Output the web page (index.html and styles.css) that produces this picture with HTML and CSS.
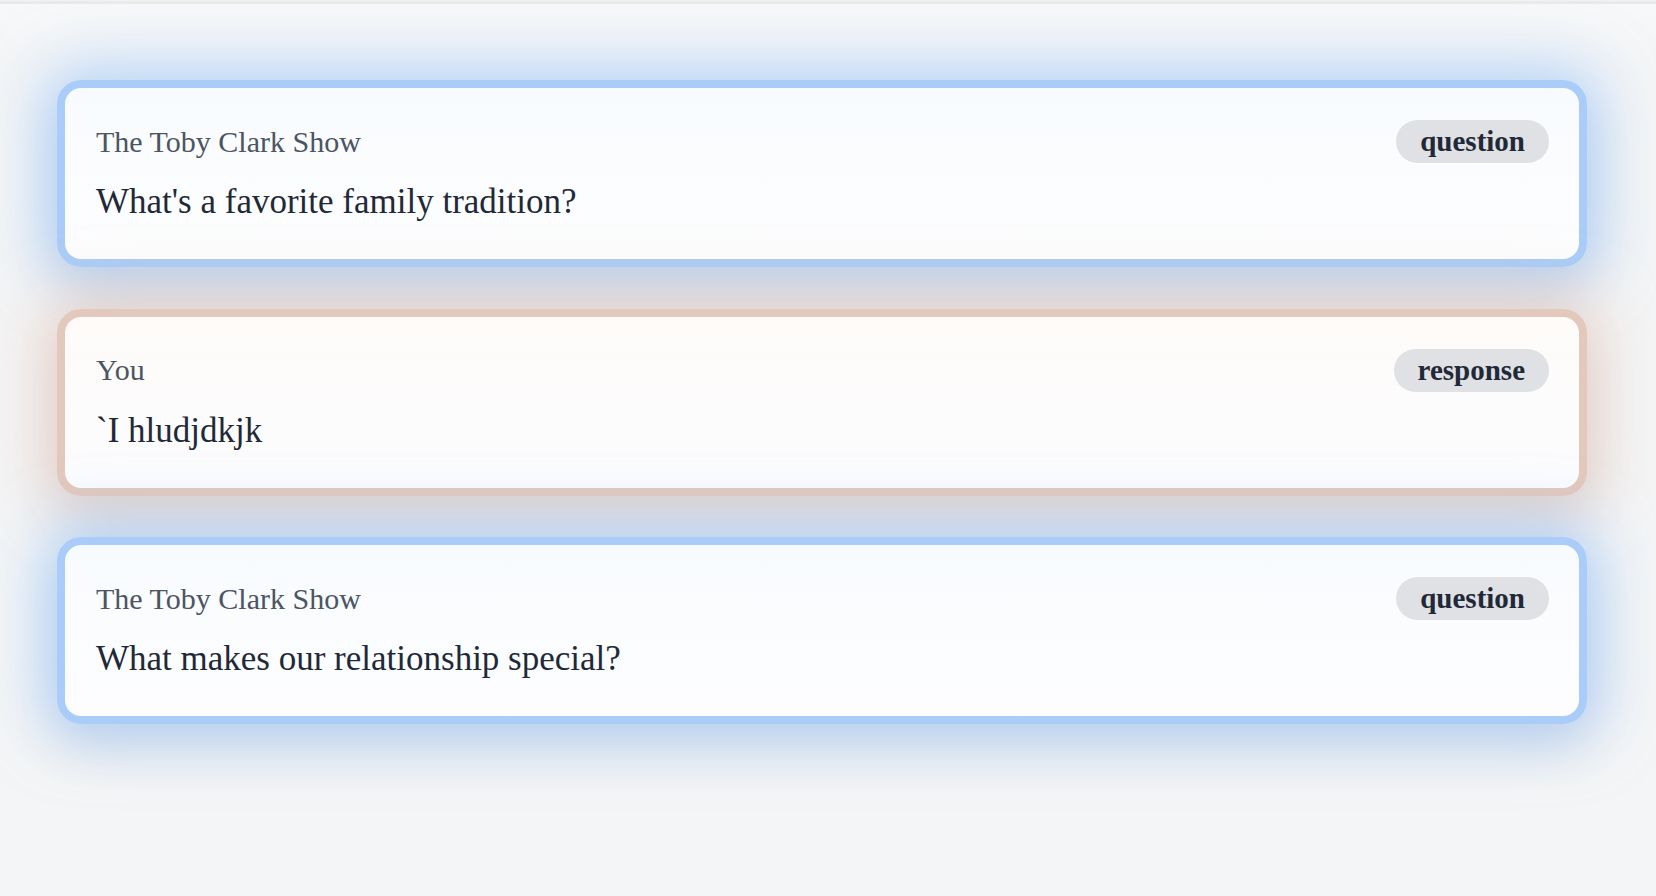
FILE: index.html
```html
<!DOCTYPE html>
<html lang="en">
<head>
<meta charset="utf-8">
<title>Conversation</title>
<link rel="stylesheet" href="styles.css">
</head>
<body>
<div class="topbar"></div>
<main class="feed">
  <article class="card card-question">
    <header class="card-head">
      <span class="author">The Toby Clark Show</span>
      <span class="badge">question</span>
    </header>
    <p class="card-text">What's a favorite family tradition?</p>
  </article>
  <article class="card card-response">
    <header class="card-head">
      <span class="author">You</span>
      <span class="badge">response</span>
    </header>
    <p class="card-text">`I hludjdkjk</p>
  </article>
  <article class="card card-question">
    <header class="card-head">
      <span class="author">The Toby Clark Show</span>
      <span class="badge">question</span>
    </header>
    <p class="card-text">What makes our relationship special?</p>
  </article>
</main>
</body>
</html>
```

FILE: styles.css
```css
html, body {
  margin: 0;
  padding: 0;
}
body {
  background: #f4f5f6;
  font-family: "Liberation Serif", "DejaVu Serif", serif;
  min-height: 896px;
}
.topbar {
  height: 3px;
  background: #eaeaea;
  border-top: 1px solid #f3f3f3;
}
.feed {
  display: flex;
  flex-direction: column;
  gap: 41.5px;
  padding: 76px 69px 0 57px;
  background: linear-gradient(#f7f8f9 0, #f4f5f6 60px);
}
.card {
  box-sizing: border-box;
  height: 187px;
  border-radius: 24px;
  border: 8px solid #a9cdf8;
  padding: 32px 30px 36px 31px;
  display: flex;
  flex-direction: column;
  gap: 16px;
}
.card-question {
  background: linear-gradient(#f8fbfe, #fdfdfe);
  border-color: #a9cdf8;
  box-shadow: 0 0 60px 14px rgba(147, 194, 250, 0.62), 0 24px 48px rgba(80, 90, 120, 0.12);
}
.card-response {
  background: linear-gradient(#fefbf9, #fbfcfe);
  border-color: #e3c8bc;
  box-shadow: 0 0 60px 14px rgba(230, 188, 168, 0.5), 0 24px 48px rgba(80, 90, 120, 0.12);
}
.card-head {
  display: flex;
  align-items: center;
  justify-content: space-between;
  height: 43px;
}
.author {
  font-size: 30px;
  color: #4b5563;
}
.badge {
  box-sizing: border-box;
  height: 43px;
  display: inline-flex;
  align-items: center;
  padding: 0 24px;
  border-radius: 22px;
  background: #dfe1e5;
  color: #1f2937;
  font-size: 29px;
  font-weight: 700;
}
.card-text {
  margin: 0;
  font-size: 35px;
  line-height: 45px;
  color: #1f2937;
}
```
